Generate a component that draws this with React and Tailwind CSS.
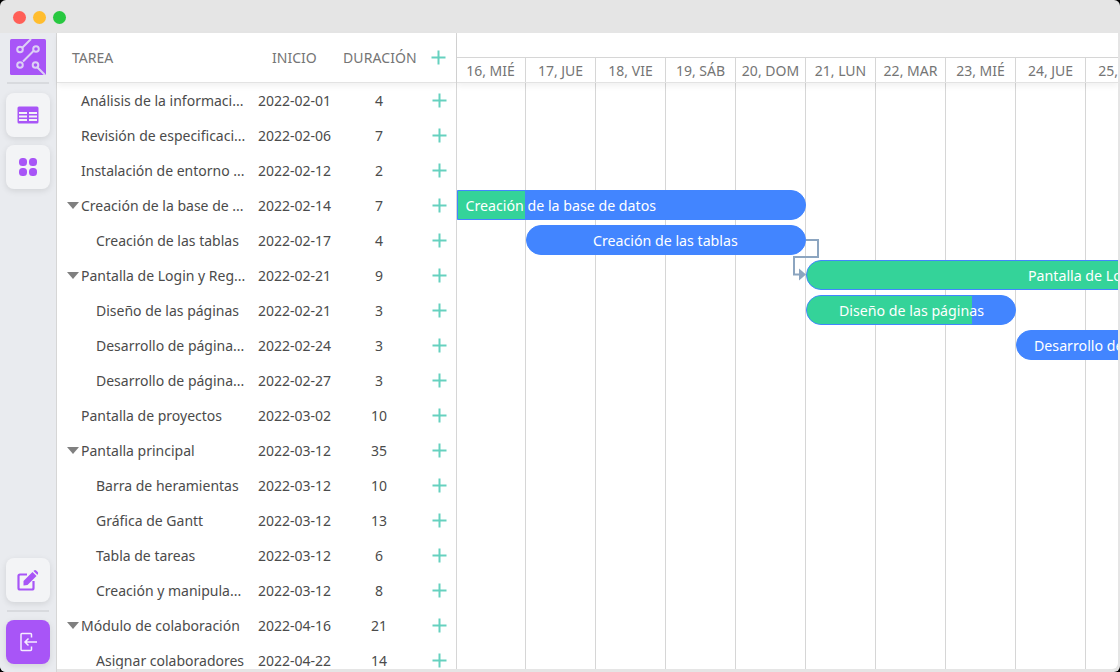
import React from 'react'

const tasks = [
  { name: 'Análisis de la informaci...', start: '2022-02-01', dur: 4, level: 1 },
  { name: 'Revisión de especificaci...', start: '2022-02-06', dur: 7, level: 1 },
  { name: 'Instalación de entorno ...', start: '2022-02-12', dur: 2, level: 1 },
  { name: 'Creación de la base de ...', start: '2022-02-14', dur: 7, level: 0 },
  { name: 'Creación de las tablas', start: '2022-02-17', dur: 4, level: 2 },
  { name: 'Pantalla de Login y Reg...', start: '2022-02-21', dur: 9, level: 0 },
  { name: 'Diseño de las páginas', start: '2022-02-21', dur: 3, level: 2 },
  { name: 'Desarrollo de página...', start: '2022-02-24', dur: 3, level: 2 },
  { name: 'Desarrollo de página...', start: '2022-02-27', dur: 3, level: 2 },
  { name: 'Pantalla de proyectos', start: '2022-03-02', dur: 10, level: 1 },
  { name: 'Pantalla principal', start: '2022-03-12', dur: 35, level: 0 },
  { name: 'Barra de heramientas', start: '2022-03-12', dur: 10, level: 2 },
  { name: 'Gráfica de Gantt', start: '2022-03-12', dur: 13, level: 2 },
  { name: 'Tabla de tareas', start: '2022-03-12', dur: 6, level: 2 },
  { name: 'Creación y manipula...', start: '2022-03-12', dur: 8, level: 2 },
  { name: 'Módulo de colaboración', start: '2022-04-16', dur: 21, level: 0 },
  { name: 'Asignar colaboradores', start: '2022-04-22', dur: 14, level: 2 },
]

const days = ['16, MIÉ', '17, JUE', '18, VIE', '19, SÁB', '20, DOM', '21, LUN', '22, MAR', '23, MIÉ', '24, JUE', '25, VIE']

function Plus() {
  return (
    <svg width="15" height="15" viewBox="0 0 15 15" className="text-[#66d1bf]">
      <path d="M7.5 0.5v14M0.5 7.5h14" stroke="currentColor" strokeWidth="2" fill="none" />
    </svg>
  )
}

function SideButton({ children, active }) {
  return (
    <div className={`w-11 h-11 rounded-lg flex items-center justify-center shadow-[0_2px_6px_rgba(0,0,0,0.1)] ${active ? 'bg-[#a855f7]' : 'bg-[#f3f4f6]'}`}>
      {children}
    </div>
  )
}

function Logo() {
  return (
    <svg width="36" height="36" viewBox="0 0 36 36">
      <rect width="36" height="36" rx="1.5" fill="#a855f7" />
      <g stroke="#ddd0f5" strokeWidth="2" fill="none">
        <path d="M12.5 8.5L21 0M13 22.5L24 11.5M27 28L35 36" />
        <circle cx="10" cy="10.5" r="2.8" />
        <circle cx="26" cy="10" r="2.8" />
        <circle cx="10" cy="26" r="2.8" />
        <circle cx="25.5" cy="26" r="2.8" />
      </g>
    </svg>
  )
}

function TableIcon() {
  return (
    <svg width="22" height="18" viewBox="0 0 22 18">
      <path fillRule="evenodd" fill="#a855f7" d="M2 0.5h18a1.5 1.5 0 0 1 1.5 1.5v14a1.5 1.5 0 0 1-1.5 1.5H2A1.5 1.5 0 0 1 0.5 16V2A1.5 1.5 0 0 1 2 0.5zM2 6v2h8V6zM12 6v2h8V6zM2 9.5v2h8v-2zM12 9.5v2h8v-2zM2 13v2h8v-2zM12 13v2h8v-2z" />
    </svg>
  )
}

function GridIcon() {
  return (
    <svg width="18" height="18" viewBox="0 0 18 18" fill="#a855f7">
      <rect x="0" y="0" width="8" height="8" rx="3.5" />
      <rect x="10" y="0" width="8" height="8" rx="3.5" />
      <rect x="0" y="10" width="8" height="8" rx="3.5" />
      <rect x="10" y="10" width="8" height="8" rx="3.5" />
    </svg>
  )
}

function EditIcon() {
  return (
    <svg width="22" height="22" viewBox="0 0 22 22" fill="none">
      <path d="M10 5.5H3a1.5 1.5 0 0 0-1.5 1.5v12a1.5 1.5 0 0 0 1.5 1.5h12a1.5 1.5 0 0 0 1.5-1.5v-7" stroke="#a855f7" strokeWidth="2.2" />
      <path d="M6.5 12L15.5 3L19.5 7L10.5 16L6.5 16.5z" fill="#a855f7" />
      <path d="M17 1.5a1.6 1.6 0 0 1 2.2 0l1.5 1.5a1.6 1.6 0 0 1 0 2.2L20.5 6L16.5 2z" fill="#a855f7" />
    </svg>
  )
}

function LogoutIcon() {
  return (
    <svg width="20" height="20" viewBox="0 0 20 20" fill="none" stroke="#f5edff" strokeWidth="1.5">
      <path d="M13.5 5.5V2.5a1 1 0 0 0-1-1H4a1 1 0 0 0-1 1v15a1 1 0 0 0 1 1h8.5a1 1 0 0 0 1-1v-3" />
      <path d="M19 10H7M10.5 6.5L7 10l3.5 3.5" />
    </svg>
  )
}

function Bar({ top, left, width, text, textLeft, color, progress, rounded }) {
  return (
    <div
      className={`absolute h-[30px] overflow-hidden border border-[#4285ff] ${rounded} ${color}`}
      style={{ top, left, width }}
    >
      {progress ? <div className="absolute left-0 top-0 h-full bg-[#34d399]" style={{ width: progress }} /> : null}
      <span className="absolute top-[4px] whitespace-nowrap text-white text-[14.2px] leading-[21px]" style={{ left: textLeft }}>{text}</span>
    </div>
  )
}

export default function App() {
  return (
    <div className="w-[1120px] h-[672px] bg-black">
      <div className="w-full h-full rounded-[6px] overflow-hidden flex flex-col bg-[#e5e5e5] font-['Noto_Sans',sans-serif]">
        <div className="h-[33px] shrink-0 flex items-center gap-[7px] pl-[13px] pt-[1px]">
          <div className="w-[13px] h-[13px] rounded-full bg-[#ff5f57]" />
          <div className="w-[13px] h-[13px] rounded-full bg-[#ffbd2e]" />
          <div className="w-[13px] h-[13px] rounded-full bg-[#28c840]" />
        </div>
        <div className="flex flex-1 min-h-0">
          <div className="w-[57px] shrink-0 bg-[#e9ebef] flex flex-col items-center pt-[6px] pb-[8px] border-r border-[#d6d6d6]">
            <Logo />
            <div className="w-[42px] h-[2px] bg-[#d8dade] mt-[7px] mb-[9px]" />
            <div className="flex flex-col gap-[8px]">
              <SideButton><TableIcon /></SideButton>
              <SideButton><GridIcon /></SideButton>
            </div>
            <div className="flex-1" />
            <SideButton><EditIcon /></SideButton>
            <div className="w-[42px] h-[2px] bg-[#d8dade] mt-[8px] mb-[8px]" />
            <SideButton active><LogoutIcon /></SideButton>
          </div>

          <div className="w-[400px] shrink-0 bg-white border-r border-[#d6d6d6] flex flex-col mb-[3px]">
            <div className="h-[50px] shrink-0 flex items-center text-[14px] text-[#757575] border-b border-[#e3e3e3] shadow-[0_3px_6px_rgba(0,0,0,0.06)] z-10 whitespace-nowrap">
              <div className="w-[201px] pl-[15px]">TAREA</div>
              <div className="w-[65px] pl-[14px]">INICIO</div>
              <div className="w-[100px] pl-[20px] tracking-[0.1px]">DURACIÓN</div>
              <div className="w-[33px] flex justify-center pr-[2px]"><Plus /></div>
            </div>
            <div className="flex-1 overflow-hidden">
              {tasks.map((t, i) => (
                <div key={i} className="h-[35px] flex items-center text-[14px] text-[#4b4b4b] whitespace-nowrap">
                  <div className="w-[201px] flex items-center">
                    {t.level === 0 ? (
                      <div className="ml-[10px] mr-[2px] w-0 h-0 border-l-[6px] border-r-[6px] border-t-[7px] border-l-transparent border-r-transparent border-t-[#808080]" />
                    ) : (
                      <div className={t.level === 1 ? 'w-[24px]' : 'w-[39px]'} />
                    )}
                    <span>{t.name}</span>
                  </div>
                  <div className="w-[73px]">{t.start}</div>
                  <div className="w-[96px] text-center">{t.dur}</div>
                  <div className="w-[29px] flex justify-center pr-[5px]"><Plus /></div>
                </div>
              ))}
            </div>
          </div>

          <div className="flex-1 min-w-0 bg-white flex flex-col mb-[3px] mr-[2px] overflow-hidden rounded-br-[6px]">
            <div className="h-[50px] shrink-0 flex flex-col border-b border-[#e3e3e3] shadow-[0_3px_6px_rgba(0,0,0,0.06)] z-10 bg-white">
              <div className="h-[25px] shrink-0 border-b border-[#d6d6d6]" />
              <div className="flex flex-1 min-h-0 -ml-px">
                {days.map((d) => (
                  <div key={d} className="w-[70px] shrink-0 border-r border-[#d6d6d6] text-center text-[14px] pt-[2px] leading-[22px] text-[#757575] whitespace-nowrap">{d}</div>
                ))}
              </div>
            </div>
            <div className="relative flex-1 overflow-hidden">
              <div className="flex h-full -ml-px">
                {days.map((d) => (
                  <div key={d} className="w-[70px] shrink-0 border-r border-[#d6d6d6]" />
                ))}
              </div>
              <Bar top={107} left={0} width={349} rounded="rounded-r-[15px]" color="bg-[#4285ff]" progress={67} text="Creación de la base de datos" textLeft={7.5} />
              <Bar top={142} left={69} width={280} rounded="rounded-[15px]" color="bg-[#4285ff]" text="Creación de las tablas" textLeft={66} />
              <Bar top={177} left={349} width={320} rounded="rounded-l-[15px]" color="bg-[#34d399]" text="Pantalla de Login y Registro" textLeft={221} />
              <Bar top={212} left={349} width={210} rounded="rounded-[15px]" color="bg-[#4285ff]" progress={165} text="Diseño de las páginas" textLeft={32} />
              <Bar top={247} left={559} width={110} rounded="rounded-l-[15px]" color="bg-[#4285ff]" text="Desarrollo de páginas" textLeft={17} />
              <svg className="absolute left-[335px] top-[156px]" width="30" height="44" viewBox="0 0 30 44" fill="none">
                <path d="M14 1H26V18H2V35.5H8" stroke="#8ca5c0" strokeWidth="2" />
                <path d="M7 29.5L14 35.5L7 41.5z" fill="#8ca5c0" />
              </svg>
            </div>
          </div>
        </div>
      </div>
    </div>
  )
}
